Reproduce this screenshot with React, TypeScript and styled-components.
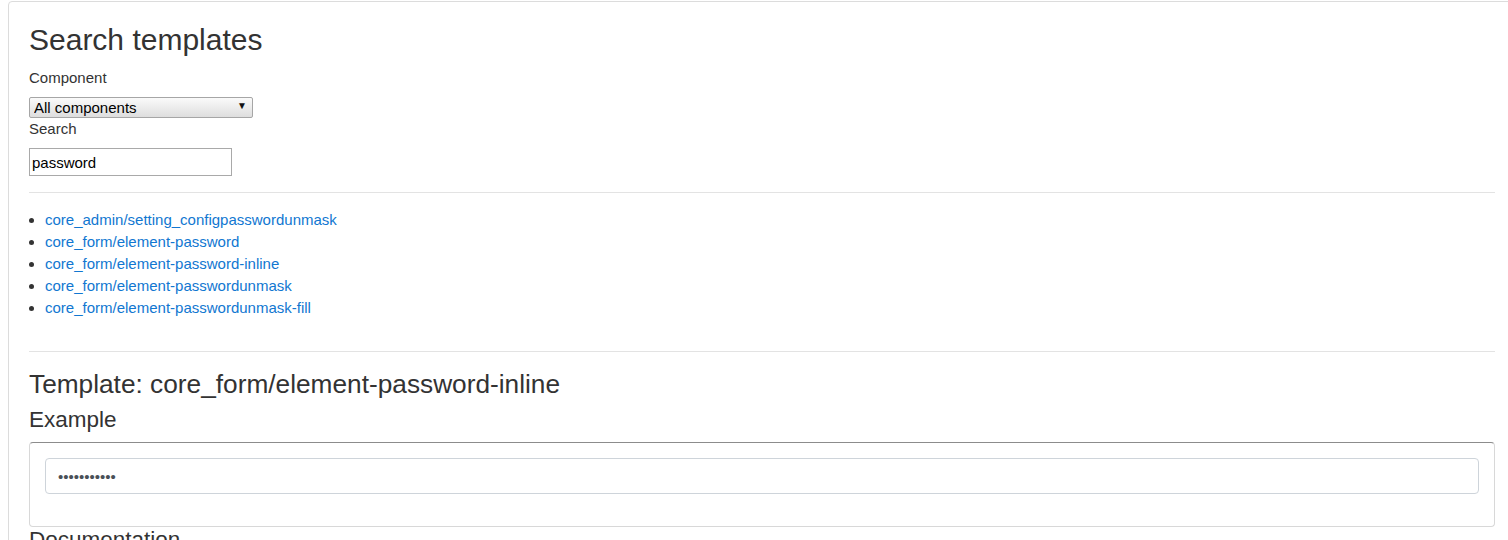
import styled, { createGlobalStyle } from "styled-components";

const GlobalStyle = createGlobalStyle`
  html, body {
    margin: 0;
    padding: 0;
    background: #fff;
    overflow: hidden;
  }
  body {
    font-family: "Liberation Sans", Arial, sans-serif;
    font-size: 15px;
    line-height: 20px;
    color: #333;
  }
`;

const Card = styled.div`
  margin: 1px 0 0 8px;
  width: 1466px;
  padding: 0 20px 20px 20px;
  border: 1px solid #dcdcdc;
  border-radius: 4px;
  background: #fff;
`;

const Title = styled.h2`
  margin: 19px 0 0 0;
  font-size: 30px;
  font-weight: 400;
  line-height: 38px;
  color: #333;
`;

const Label = styled.label`
  display: block;
  font-size: 15px;
  line-height: 20px;
  color: #333;
  margin-top: ${(p: { $top: number }) => p.$top}px;
`;

const SelectWrap = styled.div`
  position: relative;
  width: 224px;
  margin-top: 9px;
`;

const Select = styled.select`
  display: block;
  width: 224px;
  height: 21px;
  font-family: "Liberation Sans", Arial, sans-serif;
  font-size: 15px;
  color: #000;
  border: 1px solid #a6a6a6;
  border-radius: 2px;
  padding: 0 4px;
  appearance: none;
  background: linear-gradient(#fafafa, #dedede);
`;

const Caret = styled.span`
  position: absolute;
  right: 6px;
  top: 3px;
  font-size: 10px;
  line-height: 12px;
  color: #111;
  pointer-events: none;
`;

const SearchInput = styled.input`
  display: block;
  margin-top: 9px;
  width: 203px;
  height: 28px;
  box-sizing: border-box;
  border: 1px solid #a9a9a9;
  padding: 0 2px;
  font-family: "Liberation Sans", Arial, sans-serif;
  font-size: 15px;
  color: #000;
  outline: none;
`;

const Rule = styled.hr`
  border: 0;
  border-top: 1px solid #e3e3e3;
  margin: ${(p: { $top: number }) => p.$top}px 0 0 0;
`;

const List = styled.ul`
  margin: 16px 0 0 0;
  padding-left: 16px;
  line-height: 22px;
`;

const Item = styled.li`
  font-size: 15px;
  color: #333;
`;

const Link = styled.a`
  color: #1177d1;
  text-decoration: none;
`;

const TemplateTitle = styled.h3`
  margin: 17px 0 0 0;
  font-size: 26.25px;
  font-weight: 400;
  line-height: 30px;
  color: #333;
`;

const SubTitle = styled.h4`
  margin: ${(p: { $top: number }) => p.$top}px 0 0 0;
  font-size: 22.5px;
  font-weight: 400;
  line-height: 26px;
  color: #333;
`;

const ExampleBox = styled.div`
  margin-top: 9px;
  padding: 15px 15px 32px 15px;
  border: 1px solid #d8d8d8;
  border-top-color: #8c8c8c;
  border-radius: 4px;
`;

const PasswordField = styled.input`
  display: block;
  width: 100%;
  height: 36px;
  box-sizing: border-box;
  border: 1px solid #ced4da;
  border-radius: 4px;
  padding: 0 12px;
  font-size: 15px;
  color: #495057;
  outline: none;
`;

const links = [
  "core_admin/setting_configpasswordunmask",
  "core_form/element-password",
  "core_form/element-password-inline",
  "core_form/element-passwordunmask",
  "core_form/element-passwordunmask-fill",
];

export default function App() {
  return (
    <>
      <GlobalStyle />
      <Card>
        <Title>Search templates</Title>
        <Label $top={9}>Component</Label>
        <SelectWrap>
          <Select defaultValue="all">
            <option value="all">All components</option>
          </Select>
          <Caret>▼</Caret>
        </SelectWrap>
        <Label $top={1}>Search</Label>
        <SearchInput defaultValue="password" />
        <Rule $top={16} />
        <List>
          {links.map((l) => (
            <Item key={l}>
              <Link href="#">{l}</Link>
            </Item>
          ))}
        </List>
        <Rule $top={32} />
        <TemplateTitle>Template: core_form/element-password-inline</TemplateTitle>
        <SubTitle $top={8}>Example</SubTitle>
        <ExampleBox>
          <PasswordField type="password" defaultValue="passwordxxx" />
        </ExampleBox>
        <SubTitle $top={0}>Documentation</SubTitle>
      </Card>
    </>
  );
}
